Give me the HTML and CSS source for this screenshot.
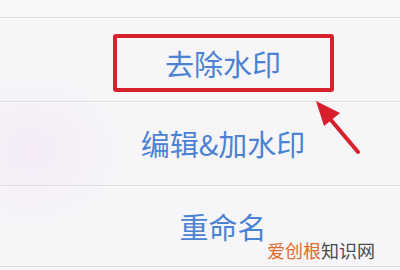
FILE: index.html
```html
<!DOCTYPE html>
<html lang="zh">
<head>
<meta charset="utf-8">
<link rel="stylesheet" href="styles.css">
</head>
<body>
<div class="screen">
  <div class="topbar"></div>
  <div class="menu">
    <div class="item"><span class="highlight">去除水印</span></div>
    <div class="item">编辑&amp;加水印</div>
    <div class="item item-last">重命名</div>
  </div>
  <svg class="arrow" width="60" height="70" viewBox="0 0 60 70">
    <line x1="12" y1="17" x2="50" y2="62" stroke="#d8202c" stroke-width="4" stroke-linecap="round"/>
    <polygon points="8,11 32,23 16,36" fill="#d8202c"/>
  </svg>
  <div class="watermark"><span class="wm-orange">爱创根</span>知识网</div>
</div>
</body>
</html>
```
FILE: styles.css
```css
html, body {
  margin: 0;
  padding: 0;
}
body {
  width: 400px;
  height: 270px;
  overflow: hidden;
  background: #f6f6f8;
  font-family: "Noto Sans CJK SC", "Noto Sans", sans-serif;
}
.screen {
  position: relative;
  width: 400px;
  height: 270px;
  background:
    radial-gradient(ellipse 100px 80px at 30px 150px, rgba(244, 234, 247, 0.9), rgba(246, 246, 248, 0) 100%),
    #f6f6f8;
}
.topbar {
  height: 17px;
  background: #f8f8f8;
  border-bottom: 1px solid #dadada;
  box-shadow: 0 1px 0 #fcfcfc;
}
.menu {
  display: flex;
  flex-direction: column;
}
.item {
  height: 83px;
  display: flex;
  align-items: center;
  justify-content: center;
  padding-left: 46px;
  border-bottom: 1px solid #dcdcde;
  box-shadow: 0 1px 0 #fbfbfb;
  color: #4c82d2;
  font-size: 29px;
  line-height: 1;
}
.item-last {
  height: 80px;
}
.highlight {
  box-sizing: border-box;
  width: 221px;
  height: 58px;
  margin-top: 7px;
  display: flex;
  align-items: center;
  justify-content: center;
  border: 4px solid #d8202c;
  border-radius: 3px;
}
.arrow {
  position: absolute;
  left: 308px;
  top: 90px;
}
.watermark {
  position: absolute;
  left: 267px;
  top: 239px;
  font-size: 18px;
  line-height: 22px;
  color: #4a4a4a;
}
.wm-orange {
  color: #e06a2c;
}
```
